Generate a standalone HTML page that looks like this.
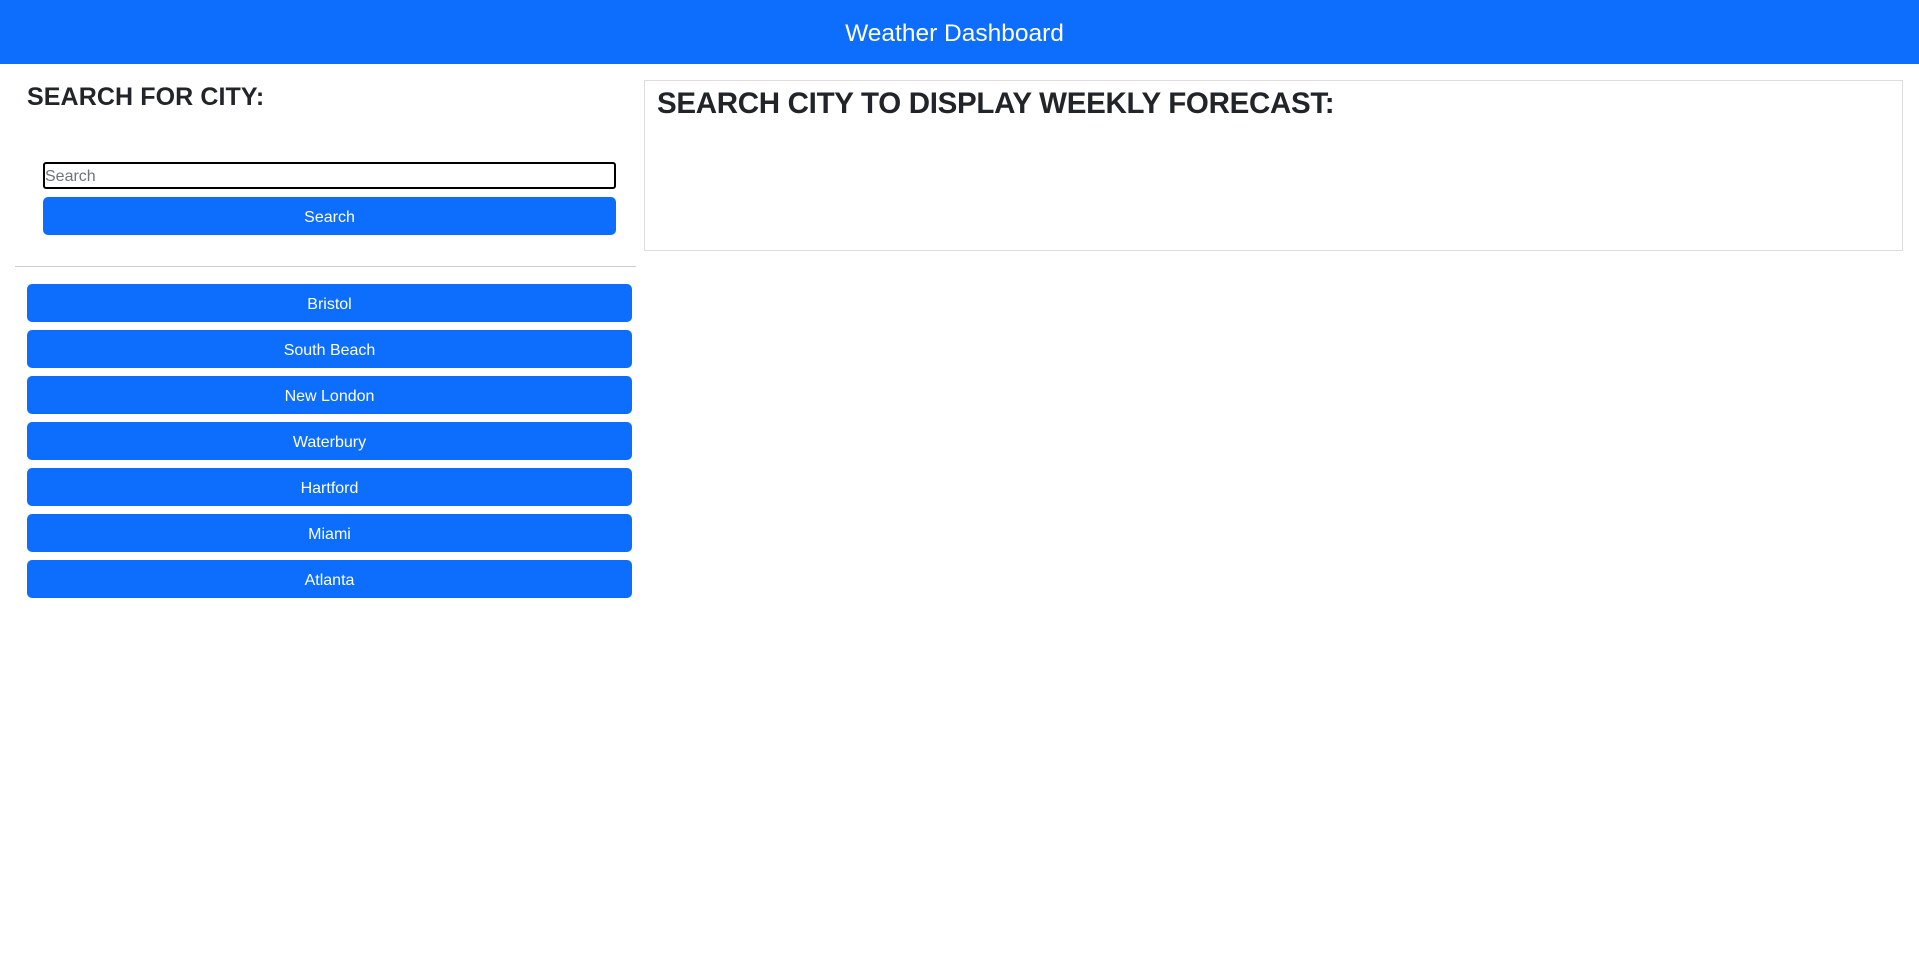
<!DOCTYPE html>
<html><head><meta charset="utf-8"><style>
*{box-sizing:border-box;margin:0;padding:0}
body{width:1919px;height:964px;background:#fff;font-family:"Liberation Sans",sans-serif;color:#212529;position:relative;overflow:hidden}
.hdr{position:absolute;left:0;top:0;width:1919px;height:64px;background:#0d6efd;color:#fff;font-size:24.5px;text-align:center;line-height:67px;padding-right:10px}
.h3{position:absolute;left:27px;top:83px;font-size:25px;font-weight:bold;white-space:nowrap;letter-spacing:0.1px}
.inp{position:absolute;left:43px;top:162px;width:573px;height:27px;border:2px solid #000;border-radius:3px;font-size:16px;color:#6c757d;line-height:25px;padding-left:0}
.btn{position:absolute;background:#0d6efd;color:#fff;border-radius:5px;text-align:center;font-size:16px}
hr{position:absolute;left:15px;top:266px;width:621px;border:0;border-top:1px solid #ccc}
.card{position:absolute;left:644px;top:80px;width:1259px;height:171px;border:1px solid #ddd}
.h2{position:absolute;left:12px;top:6px;font-size:29.5px;font-weight:bold;white-space:nowrap;letter-spacing:-0.3px}
.c{left:27px;width:605px;height:38px;line-height:41px}
</style></head><body>
<div class="hdr">Weather Dashboard</div>
<div class="h3">SEARCH FOR CITY:</div>
<div class="inp">Search</div>
<div class="btn" style="left:43px;top:197px;width:573px;height:38px;line-height:41px">Search</div>
<hr>
<div class="btn c" style="top:284px">Bristol</div>
<div class="btn c" style="top:330px">South Beach</div>
<div class="btn c" style="top:376px">New London</div>
<div class="btn c" style="top:422px">Waterbury</div>
<div class="btn c" style="top:468px">Hartford</div>
<div class="btn c" style="top:514px">Miami</div>
<div class="btn c" style="top:560px">Atlanta</div>
<div class="card"><div class="h2">SEARCH CITY TO DISPLAY WEEKLY FORECAST:</div></div>
</body></html>
